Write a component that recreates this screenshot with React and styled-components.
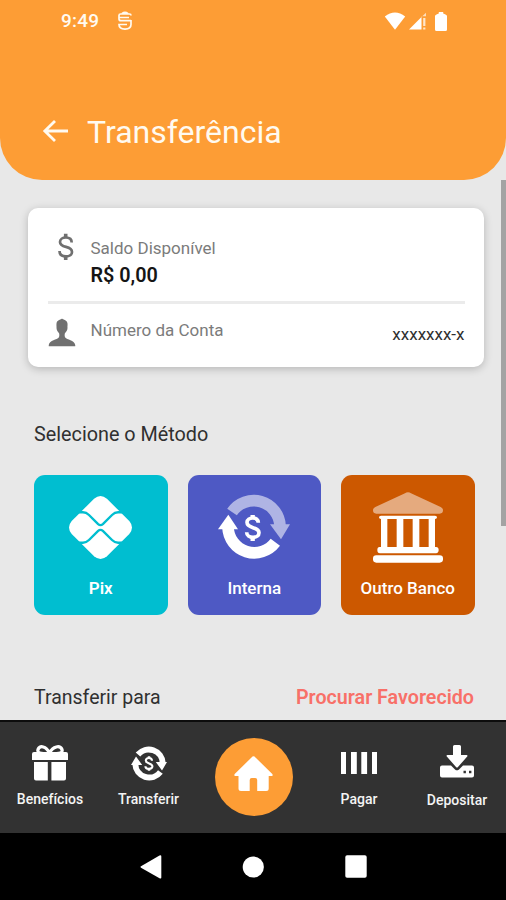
import React from "react";
import styled, { createGlobalStyle } from "styled-components";

const GlobalStyle = createGlobalStyle`
  * { box-sizing: border-box; }
  body { margin: 0; background: #000; font-family: Roboto, sans-serif; }
  svg { display: block; flex: none; }
`;

const Screen = styled.div`
  width: 506px;
  height: 900px;
  display: flex;
  flex-direction: column;
  overflow: hidden;
  background: #e8e8e8;
`;

const Header = styled.header`
  height: 180px;
  flex: none;
  background: #fd9d35;
  border-radius: 0 0 42px 42px;
`;

const StatusBar = styled.div`
  height: 42px;
  padding: 0 59px 0 61px;
  display: flex;
  align-items: center;
  gap: 18px;
  color: #fffaf0;
`;

const StatusIcons = styled.div`
  margin-left: auto;
  display: flex;
  align-items: center;
  gap: 2px;
`;

const BatterySlot = styled.div`
  margin-left: 6px;
`;

const TitleRow = styled.div`
  height: 62px;
  margin-top: 58.5px;
  padding-left: 42px;
  display: flex;
  align-items: center;
  gap: 18px;
`;

const BackButton = styled.div`
  padding-bottom: 2px;
`;

const Text = styled.span`
  display: block;
  white-space: nowrap;
  color: ${(p) => p.$color || "#303030"};
  font-size: ${(p) => p.$size}px;
  font-weight: ${(p) => p.$weight || 400};
  line-height: ${(p) => p.$line || 24}px;
  letter-spacing: ${(p) => p.$spacing || 0}px;
`;

const Content = styled.main`
  flex: 1;
  min-height: 0;
  display: flex;
  justify-content: space-between;
  overflow: hidden;
`;

const ScrollArea = styled.div`
  width: 484px;
  padding: 28px 0 0 28px;
`;

const ScrollThumb = styled.div`
  width: 5px;
  height: 346px;
  background: #a3a3a3;
`;

const Card = styled.section`
  height: 158.5px;
  padding: 0 19.5px 0 20px;
  border-radius: 10px;
  background: #fff;
  box-shadow: 0 2px 8px rgba(0, 0, 0, 0.22);
`;

const BalanceRow = styled.div`
  height: 93px;
  padding-top: 25px;
  display: grid;
  grid-template-columns: 42.5px 1fr;
  align-items: start;
`;

const BalanceIcon = styled.div`
  padding-left: 9px;
`;

const BalanceText = styled.div`
  padding-top: 2px;
`;

const Divider = styled.div`
  height: 3px;
  background: #ebebeb;
`;

const AccountRow = styled.div`
  display: grid;
  grid-template-columns: 42.5px 1fr auto;
  align-items: start;
  padding-top: 14px;
`;

const AccountValue = styled.div`
  padding-top: 4px;
`;

const SectionTitle = styled.h2`
  margin: 56px 0 0 6px;
  font-weight: 400;
`;

const MethodGrid = styled.div`
  margin: 28.5px 0 0 6px;
  display: grid;
  grid-template-columns: repeat(3, 133.5px);
  column-gap: 20px;
`;

const MethodTile = styled.button`
  height: 140px;
  padding: ${(p) => p.$top}px 0 0;
  border: 0;
  border-radius: 11px;
  display: flex;
  flex-direction: column;
  align-items: center;
  background: ${(p) => p.$bg};
  font-family: inherit;
`;

const TileIcon = styled.div`
  height: ${(p) => p.$height}px;
`;

const TransferRow = styled.div`
  margin: 70.5px 10px 0 6px;
  display: flex;
  justify-content: space-between;
`;

const TabBar = styled.nav`
  height: 113px;
  flex: none;
  border-top: 2px solid #0c0c0c;
  display: grid;
  grid-template-columns: 100px 97px 113px 98px 98px;
  background: #323232;
`;

const Tab = styled.div`
  display: flex;
  flex-direction: column;
  align-items: center;
  padding-top: ${(p) => p.$top}px;
`;

const TabIcon = styled.div`
  height: ${(p) => p.$height}px;
`;

const HomeButton = styled.div`
  width: 78px;
  height: 78px;
  border-radius: 50%;
  background: #fd9d35;
  display: flex;
  align-items: center;
  justify-content: center;
  padding-bottom: 6px;
`;

const SystemBar = styled.div`
  height: 67px;
  flex: none;
  padding: 0 139.5px;
  display: flex;
  align-items: center;
  justify-content: space-between;
  background: #000;
`;

const NotificationIcon = () => (
  <svg width="16" height="20" viewBox="0 0 16 20" fill="none" stroke="#fffaf0" strokeWidth="1.7">
    <path d="M14 9.700H4q-2 0-2-2V4.500q0-1.500 1.500-1.500H12.500q1.500 0 1.500 1.500M2 6.500h10M5 2.600q3-2.500 6 0" />
    <path d="M14 9v4.500q0 4.500-6 4.700-6-.2-6-4.700h8" />
  </svg>
);

const WifiIcon = () => (
  <svg width="22" height="18" viewBox="0 0 22 18" fill="#fff">
    <path d="M.8 4.5Q11-3.3 21.2 4.5L11 17.8z" />
  </svg>
);

const SignalIcon = () => (
  <svg width="19" height="18" viewBox="0 0 19 18">
    <path d="M1 17.5L13.5 5v12.5z" fill="#fff" />
    <path d="M13.5 5L18 .8v3.4h-4.5z" fill="#fff" opacity=".65" />
    <path d="M15.2 6h2.2v8h-2.2zM15.2 15.4h2.2v2.2h-2.2z" fill="#fff" opacity=".75" />
  </svg>
);

const BatteryIcon = () => (
  <svg width="12" height="19" viewBox="0 0 12 19" fill="#fff">
    <path d="M3.8 0h4.4v1.500L10.500 2.500Q12 3 12 4v13.500Q12 19 10.500 19h-9Q0 19 0 17.500V4Q0 3 1.500 2.500L3.800 1.500z" />
  </svg>
);

const BackIcon = () => (
  <svg width="27" height="22" viewBox="0 0 27 22" fill="none" stroke="#fffaf0" strokeWidth="2.8">
    <path d="M26 11H3M13 1L2.8 11 13 21" />
  </svg>
);

const DollarIcon = () => (
  <svg width="17" height="28" viewBox="0 0 17 28" fill="none" stroke="#707070" strokeWidth="2.7">
    <path d="M14.7 9.5c0-3.1-2.2-5-5.8-5-3.5 0-5.9 1.8-5.9 4.4 0 2.9 2.3 4 6 5 4 1 6 2.3 6 5 0 2.8-2.5 4.5-6 4.5-4 0-6.5-2-6.5-5.4" />
    <path d="M8.7.8v4M8.7 23v4" strokeWidth="3.6" />
  </svg>
);

const PersonIcon = () => (
  <svg width="28" height="29" viewBox="0 0 26 29" preserveAspectRatio="none" fill="#707070">
    <path d="M13 .4c1 1.200 4.700 1.300 5.100 5.100.2 1.500-.1 3.100 0 4.200.1 2-.8 3.800-2.200 5.200-.6.700-.6 3.500.1 4.500 1.500 2.300 8.500 2.300 9.300 7.600v1.300H.7V27c.8-5.300 7.800-5.300 9.300-7.600.7-1 .7-3.800.1-4.500-1.400-1.400-2.200-3.200-2.200-5.200.1-1.100-.2-2.700 0-4.200C8.300 1.700 12 1.600 13 .4z" />
  </svg>
);

const PixIcon = () => (
  <svg width="63" height="63" viewBox="0 0 186 186">
    <path d="M74 8Q93-8 112 8l66 66q16 19 0 38l-66 66q-19 16-38 0L8 112q-16-19 0-38z" fill="#fff" />
    <g fill="none" stroke="#00bed0" strokeWidth="7">
      <path d="M28 48h13q10 0 18 8l27 27q7 6 14 0l27-27q8-8 18-8h13" />
      <path d="M28 138h13q10 0 18-8l27-27q7-6 14 0l27 27q8 8 18 8h13" />
    </g>
  </svg>
);

const DollarMark = () => (
  <g fill="none" stroke="#fff">
    <path d="M121 86c0-9-7-14-17-14-9 0-17 5-17 13 0 10 8 13 18 16s18 6 18 15-8 14-18 14-19-5-19-15" strokeWidth="11" />
    <path d="M104 63v12M104 127v14" strokeWidth="13" />
  </g>
);

const InternalIcon = () => (
  <svg width="73" height="66" viewBox="0 0 219 198">
    <g opacity=".55">
      <path d="M42 54A79 79 0 0 1 186 95" fill="none" stroke="#fff" strokeWidth="35" />
      <path d="M156 91h60l-27 45z" fill="#fff" />
    </g>
    <path d="M172 145A79 79 0 0 1 30 100" fill="none" stroke="#fff" strokeWidth="35" />
    <path d="M0 106h60L31 62z" fill="#fff" />
    <DollarMark />
  </svg>
);

const BankIcon = () => (
  <svg width="70" height="71" viewBox="0 0 210 213">
    <path d="M105 1q5 0 9 3l89 41q7 3 7 10 0 10-10 10H10Q0 65 0 55q0-7 7-10L96 4q4-3 9-3z" fill="#e5aa7e" />
    <path
      d="M24 71h162q6 0 6 5t-6 5v84h3q8 0 8 9t-8 10H21q-8 0-8-10t8-9h3V81q-6 0-6-5t6-5zM43 81v84h28V81zM91 81v84h28V81zM139 81v84h28V81z"
      fill="#fff"
      fillRule="evenodd"
    />
    <rect x="0" y="190" width="210" height="22" rx="10" fill="#fff" />
  </svg>
);

const GiftIcon = () => (
  <svg width="36" height="36" viewBox="0 0 36 36" fill="#fff">
    <path d="M2 7h32q2 0 2 2v6H0V9q0-2 2-2zM2 17h13.800v18.500H4q-2 0-2-2zM19.400 17H34v16.500q0 2-2 2H19.400z" />
    <path d="M17 9C8 9 5 8 6 4.500 8 0 14 1 17.500 8 21 1 28 0 30 4.500 31 8 28 9 19 9" fill="none" stroke="#fff" strokeWidth="3.200" />
  </svg>
);

const TransferIcon = () => (
  <svg width="36" height="35" viewBox="0 0 36 35">
    <g fill="none" stroke="#fff" strokeWidth="6">
      <path d="M7 8.500A14 14 0 0 1 31.700 17" />
      <path d="M29.400 26A14 14 0 0 1 4.300 18" />
    </g>
    <path d="M24.800 16H36l-5 8.500zM0 19h11.200L5 10.500z" fill="#fff" />
    <g fill="none" stroke="#fff">
      <path d="M21 14.700c0-3.500-6.200-3.500-6.200-.3 0 3.700 6.600 2.500 6.600 6 0 3.300-7 3.300-7-.2" strokeWidth="2.100" />
      <path d="M18 10.300v2.500M18 22v2.700" strokeWidth="2.500" />
    </g>
  </svg>
);

const HomeIcon = () => (
  <svg width="39" height="35" viewBox="0 0 39 35" fill="#fff">
    <path d="M17.500 1.500Q19.500-.8 21.500 1.500L38.300 18q1.200 2-.8 2h-2.800v12.500q0 2.500-2.500 2.500h-9V24q0-2-2-2h-3.500q-2 0-2 2v11H7q-2.500 0-2.500-2.500V20H1.500q-2 0-.8-2z" />
  </svg>
);

const BarcodeIcon = () => (
  <svg width="36" height="22" viewBox="0 0 36 22" fill="#fff">
    <path d="M0 0h5v22H0zM10 0h5.800v22H10zM20.300 0h5.800v22h-5.800zM31 0h5v22h-5z" />
  </svg>
);

const DepositIcon = () => (
  <svg width="34" height="33" viewBox="0 0 34 33" fill="#fff">
    <path d="M13 1.500q0-1.500 1.500-1.500h5Q21 0 21 1.500V10h5.500q1.500 0 .7 1.500L18 22q-1 1-2 0L6.800 11.500Q6 10 7.500 10H13z" />
    <path
      d="M2 20.500h9l4 4q2 1.700 4 0l4-4h9q2 0 2 2v8q0 2-2 2H2q-2 0-2-2v-8q0-2 2-2zm21.500 5.300v2.400h2.400v-2.400zm5.500 0v2.400h2.400v-2.400z"
      fillRule="evenodd"
    />
  </svg>
);

const SystemBackIcon = () => (
  <svg width="22" height="24" viewBox="0 0 22 24" fill="#fff">
    <path d="M19.500.6Q21.300-.3 21.300 1.500v21q0 1.700-1.800.8L1 12.700Q0 12 1 11.300z" />
  </svg>
);

const SystemHomeIcon = () => (
  <svg width="22" height="22" viewBox="0 0 22 22" fill="#fff">
    <circle cx="11.300" cy="11" r="10.600" />
  </svg>
);

const SystemRecentIcon = () => (
  <svg width="22" height="23" viewBox="0 0 22 23" fill="#fff">
    <rect x=".3" y=".3" width="21.400" height="22.400" rx="1.800" />
  </svg>
);

const methods = [
  { label: "Pix", bg: "#00bed0", icon: <PixIcon />, top: 20.5, weight: 600, size: 17 },
  { label: "Interna", bg: "#4e59c4", icon: <InternalIcon />, top: 19, weight: 500, size: 17 },
  { label: "Outro Banco", bg: "#cc5800", icon: <BankIcon />, top: 16.5, weight: 500, size: 17 },
];

const TabLabel = ({ children }) => (
  <Text $size={14} $weight={500} $color="#f4f4f4" $line={20}>{children}</Text>
);

export default function App() {
  return (
    <>
      <GlobalStyle />
      <Screen>
        <Header>
          <StatusBar>
            <Text $size={19} $color="#fffaf0" $weight={500} $spacing={0.2}>9:49</Text>
            <NotificationIcon />
            <StatusIcons>
              <WifiIcon />
              <SignalIcon />
              <BatterySlot><BatteryIcon /></BatterySlot>
            </StatusIcons>
          </StatusBar>
          <TitleRow>
            <BackButton><BackIcon /></BackButton>
            <Text $size={32} $line={40} $color="#fffaf0">Transferência</Text>
          </TitleRow>
        </Header>

        <Content>
          <ScrollArea>
            <Card>
              <BalanceRow>
                <BalanceIcon><DollarIcon /></BalanceIcon>
                <BalanceText>
                  <Text $size={17} $color="#7b7b7b" $line={26}>Saldo Disponível</Text>
                  <Text $size={19.8} $color="#151515" $weight={600} $line={29}>R$ 0,00</Text>
                </BalanceText>
              </BalanceRow>
              <Divider />
              <AccountRow>
                <PersonIcon />
                <Text $size={17} $color="#7b7b7b">Número da Conta</Text>
                <AccountValue><Text $size={17}>xxxxxxx-x</Text></AccountValue>
              </AccountRow>
            </Card>

            <SectionTitle><Text $size={19.8}>Selecione o Método</Text></SectionTitle>

            <MethodGrid>
              {methods.map((m) => (
                <MethodTile key={m.label} $bg={m.bg} $top={m.top}>
                  <TileIcon $height={101.4 - m.top}>{m.icon}</TileIcon>
                  <Text $size={m.size} $weight={m.weight} $color="#fff">{m.label}</Text>
                </MethodTile>
              ))}
            </MethodGrid>

            <TransferRow>
              <Text $size={19.5}>Transferir para</Text>
              <Text $size={19.7} $weight={600} $color="#f87068">Procurar Favorecido</Text>
            </TransferRow>
          </ScrollArea>
          <ScrollThumb />
        </Content>

        <TabBar>
          <Tab $top={23}>
            <TabIcon $height={44}><GiftIcon /></TabIcon>
            <TabLabel>Benefícios</TabLabel>
          </Tab>
          <Tab $top={23.5}>
            <TabIcon $height={43.5}><TransferIcon /></TabIcon>
            <TabLabel>Transferir</TabLabel>
          </Tab>
          <Tab $top={15.5}>
            <HomeButton><HomeIcon /></HomeButton>
          </Tab>
          <Tab $top={30}>
            <TabIcon $height={37}><BarcodeIcon /></TabIcon>
            <TabLabel>Pagar</TabLabel>
          </Tab>
          <Tab $top={22.5}>
            <TabIcon $height={45.5}><DepositIcon /></TabIcon>
            <TabLabel>Depositar</TabLabel>
          </Tab>
        </TabBar>

        <SystemBar>
          <SystemBackIcon />
          <SystemHomeIcon />
          <SystemRecentIcon />
        </SystemBar>
      </Screen>
    </>
  );
}
